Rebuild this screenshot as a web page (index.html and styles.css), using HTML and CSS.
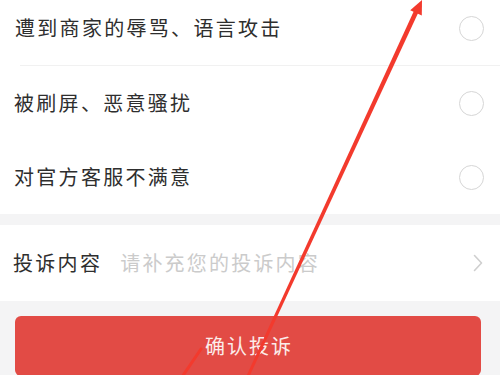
FILE: index.html
```html
<!DOCTYPE html>
<html lang="zh-CN">
<head>
<meta charset="utf-8">
<link rel="stylesheet" href="styles.css">
</head>
<body>
<div class="page">
  <div class="reasons">
    <div class="row divided">
      <span class="label">遭到商家的辱骂、语言攻击</span>
      <span class="radio"></span>
    </div>
    <div class="row">
      <span class="label">被刷屏、恶意骚扰</span>
      <span class="radio"></span>
    </div>
    <div class="row">
      <span class="label">对官方客服不满意</span>
      <span class="radio"></span>
    </div>
  </div>
  <div class="content-row">
    <span class="label">投诉内容</span>
    <span class="placeholder">请补充您的投诉内容</span>
    <svg class="chevron" width="10" height="18" viewBox="0 0 10 18"><path d="M1.5 1.5 L8.5 9 L1.5 16.5" fill="none" stroke="#cfcfcf" stroke-width="1.6" stroke-linecap="round" stroke-linejoin="round"/></svg>
  </div>
  <div class="footer">
    <button class="confirm">确认投诉</button>
  </div>
</div>
<svg class="annotation" width="500" height="375" viewBox="0 0 500 375">
  <polygon points="418.1,13 413.9,11 244.3,380.6 247.1,381.4" fill="#f33a2d"/>
  <polygon points="422,0 421.8,15.6 410.2,10.2" fill="#f33a2d"/>
  <line x1="182" y1="377" x2="201" y2="349" stroke="#f33a2d" stroke-width="3" stroke-linecap="round"/>
</svg>
</body>
</html>
```
FILE: styles.css
```css
html, body {
  margin: 0;
  padding: 0;
  background: #f4f4f5;
  overflow: hidden;
}
body {
  width: 500px;
  height: 375px;
  position: relative;
  font-family: "Noto Sans CJK SC", "Noto Sans", sans-serif;
  color: #2e2e2e;
}
.page {
  display: flex;
  flex-direction: column;
}
.reasons {
  background: #ffffff;
  margin-top: -9px;
}
.row {
  height: 74px;
  display: flex;
  align-items: center;
  justify-content: space-between;
  padding: 0 16px 0 14px;
}
.row.divided {
  height: 75px;
  box-sizing: border-box;
  border-bottom: 1px solid #f1f1f1;
  margin-left: 20px;
  padding-left: 0;
}
.row.divided .label {
  margin-left: -5px;
}
.label {
  font-size: 20px;
  line-height: 1;
  letter-spacing: 2.3px;
  color: #2e2e2e;
}
.radio {
  width: 23px;
  height: 23px;
  border: 1.6px solid #d6d6d6;
  border-radius: 50%;
  flex: none;
}
.content-row {
  margin-top: 11px;
  height: 76px;
  background: #ffffff;
  display: flex;
  align-items: center;
  padding: 0 17px 0 13px;
}
.placeholder {
  font-size: 20px;
  line-height: 1;
  letter-spacing: 2.2px;
  color: #cbcbcb;
  margin-left: 18px;
  flex: 1;
}
.chevron {
  flex: none;
}
.footer {
  padding: 15px 19px 0 15px;
}
.confirm {
  display: block;
  width: 100%;
  height: 60px;
  border: none;
  border-radius: 6px;
  background: #e24b45;
  color: #fbecea;
  font-family: "Noto Sans CJK SC", "Noto Sans", sans-serif;
  font-size: 20px;
  letter-spacing: 2px;
  padding: 0 0 0 2px;
  line-height: 1;
  padding-bottom: 0;
}
.annotation {
  position: absolute;
  left: 0;
  top: 0;
  pointer-events: none;
}
```
